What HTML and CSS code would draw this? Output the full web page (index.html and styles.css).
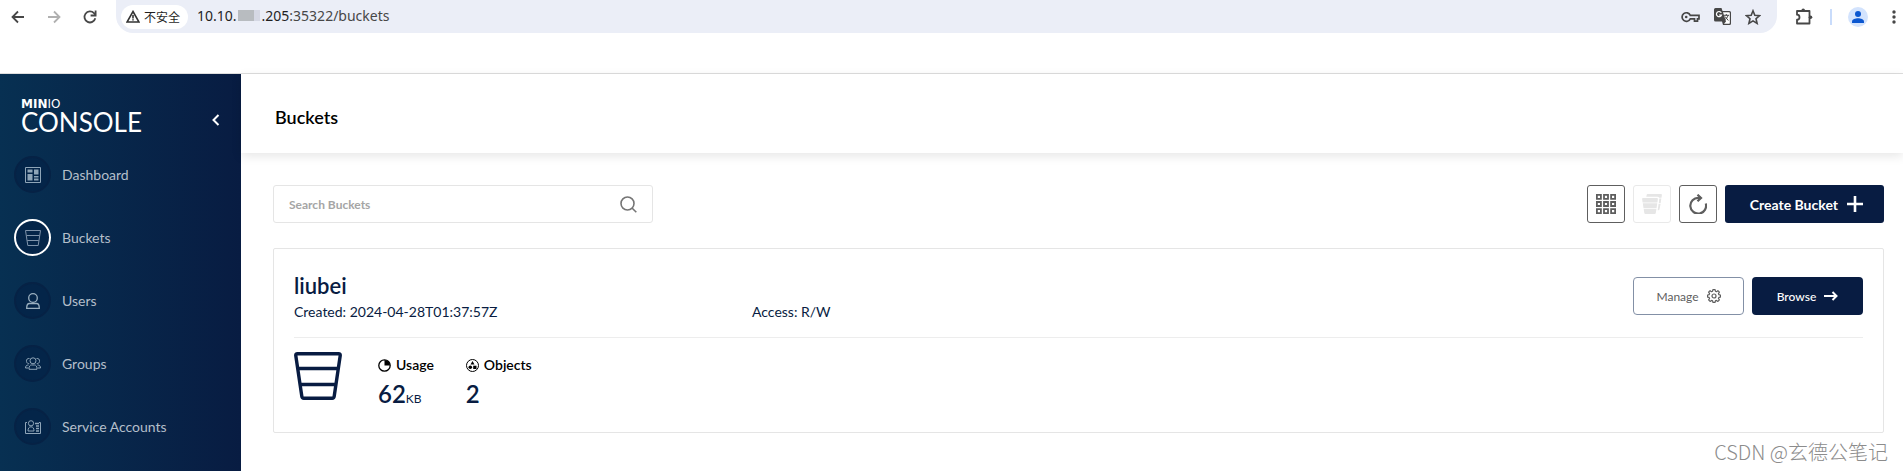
FILE: index.html
```html
<!doctype html>
<html lang="en">
<head>
<meta charset="utf-8">
<title>MinIO Console</title>
<link rel="stylesheet" href="styles.css">
</head>
<body>
<div class="browser">
	<button class="nav_btn" aria-label="Back"><svg width="16" height="16" viewBox="0 0 16 16" fill="none" stroke="#474747" stroke-width="1.8"><path d="M14 8H3M8 2.5L2.5 8 8 13.500"/></svg></button>
	<button class="nav_btn" aria-label="Forward"><svg width="16" height="16" viewBox="0 0 16 16" fill="none" stroke="#b0b0b0" stroke-width="1.8"><path d="M2 8h11M8 2.500L13.500 8 8 13.500"/></svg></button>
	<button class="nav_btn" aria-label="Reload"><svg width="16" height="16" viewBox="0 0 16 16" fill="none" stroke="#474747" stroke-width="1.8"><path d="M13.300 9.300A5.500 5.500 0 1 1 12 4.200L13.500 5.800"/><path d="M13.600 1.500v5h-5"/></svg></button>
	<div class="omnibox">
		<button class="chip"><svg width="14" height="13" viewBox="0 0 14 13" fill="none" stroke="#333" stroke-width="1.6"><path d="M7 1.500L13 12H1z"/><path d="M7 5v3.500M7 9.300v1.300"/></svg>不安全</button>
		<span class="url"><span>10.10.</span><span class="mosaic"></span><span>.205<span class="path">:35322/buckets</span></span></span>
		<div class="omni_icons">
			<svg width="19" height="12" viewBox="0 0 19 12" fill="none" stroke="#474747" stroke-width="1.7"><path d="M9.300 4.300h8.700v3.500h-1.500v2.300h-3v-2.300H9.300A4.300 4.300 0 1 1 9.300 4.300z"/><circle cx="5.200" cy="6" r="1.300" fill="#474747" stroke="none"/></svg>
			<svg width="17" height="17" viewBox="0 0 17 17"><path fill="#474747" d="M1.500 0h6l1 3H15.500a1.500 1.500 0 0 1 1.500 1.500v11a1.500 1.500 0 0 1-1.500 1.500H9l-1-3.500H1.500A1.500 1.500 0 0 1 0 12V1.500A1.500 1.500 0 0 1 1.500 0z"/><path fill="#fff" d="M9 4.200h6.300l.5.500v10.600l-.5.500H10l2-2.300z"/><path d="M7.300 4.800A2.600 2.600 0 1 0 7.500 7H5" fill="none" stroke="#fff" stroke-width="1.200"/><path d="M9.800 7.300h5.200M12.300 6v1.300M14 7.500c-.5 2-2 3.500-3.500 4.300M11 8.500l3.300 4" fill="none" stroke="#474747"/></svg>
			<svg width="16" height="16" viewBox="0 0 16 16" fill="none" stroke="#474747" stroke-width="1.600"><path d="M8 1.800l1.800 4.400 4.800.4-3.600 3.100 1.100 4.700L8 11.900l-4.100 2.500L5 9.700 1.400 6.600l4.800-.4z"/></svg>
		</div>
	</div>
	<button class="ext_btn" aria-label="Extensions"><svg width="18" height="18" viewBox="0 0 18 18"><path fill="none" stroke="#474747" stroke-width="1.800" stroke-linejoin="round" d="M2 3h12.500v12.500H2v-3.800a2.500 2.500 0 0 0 0-5z"/><circle cx="8.200" cy="2.200" r="1.800" fill="#474747"/><circle cx="15.500" cy="9.200" r="1.800" fill="#474747"/></svg></button>
	<span class="split"></span>
	<button class="profile" aria-label="Profile"><svg width="20" height="20" viewBox="0 0 20 20"><circle cx="10" cy="10" r="10" fill="#d3e3fd"/><circle cx="10" cy="7" r="3" fill="#0b57d0"/><path fill="#0b57d0" d="M4 16v-1.500c0-2.200 3.500-3.300 6-3.300s6 1.100 6 3.300V16z"/></svg></button>
	<button class="more" aria-label="Menu"><svg width="4" height="16" viewBox="0 0 4 16" fill="#474747"><circle cx="2" cy="3" r="1.700"/><circle cx="2" cy="8" r="1.700"/><circle cx="2" cy="13" r="1.700"/></svg></button>
</div>
<div class="bookmarks"></div>
<div class="app">
	<aside class="sidebar">
		<div class="brand">
			<div class="logo">
				<span class="logo_top"><b>MIN</b>IO</span>
				<span class="logo_name">CONSOLE</span>
			</div>
			<button class="collapse" aria-label="Collapse menu"><svg width="8" height="12" viewBox="0 0 8 12" fill="none" stroke="#fff" stroke-width="2"><path d="M6.500 1L1.500 6l5 5"/></svg></button>
		</div>
		<nav class="menu">
			<a href="#" class="item"><span class="round"><svg width="16" height="16" viewBox="0 0 16 16"><path d="M.5.500h15v15H.5z" fill="none" stroke="#8fa5b8"/><path fill="#8fa5b8" d="M2.500 2.500h5v3h-5zM9 2.500h4.500v5H9zM2.500 7h5v6.500h-5zM9 9h4.500v1.500H9zM9 11.500h4.500v2H9z"/></svg></span>Dashboard</a>
			<a href="#" class="item"><span class="round active"><svg width="16" height="16" viewBox="0 0 16 16" fill="none" stroke="#7f93aa"><path d="M.5.500h15l-2.300 15H2.800zM1.500 5.500h13M2.200 10.500h11.600"/></svg></span>Buckets</a>
			<a href="#" class="item"><span class="round"><svg width="14" height="16" viewBox="0 0 14 16" fill="none" stroke="#9aafbf" stroke-width="1.300"><circle cx="7" cy="5" r="4.300"/><path d="M3.500 10.500h7c1.700 0 2.800 1.800 2.800 4.800H.7c0-3 1.100-4.800 2.800-4.800z"/></svg></span>Users</a>
			<a href="#" class="item"><span class="round"><svg width="16" height="13" viewBox="0 0 16 13" fill="none" stroke="#8fa5b8"><circle cx="8" cy="3.800" r="3"/><path d="M4 12.300c0-3 1-4.300 2.500-4.300h3c1.500 0 2.500 1.300 2.500 4.300zM4.500 1.600C2.500 1 1.200 2.500 1.500 4.500c.2 1.500 1.500 2.300 2.700 2M11.500 1.600c2-.6 3.300.9 3 2.900-.2 1.500-1.500 2.300-2.700 2M3.500 8C1.500 8 .5 9 .5 11h3M12.500 8c2 0 3 1 3 3h-3"/></svg></span>Groups</a>
			<a href="#" class="item"><span class="round"><svg width="16" height="14" viewBox="0 0 16 14" fill="none" stroke="#8fa5b8"><path d="M2 2.500H.5v11h15v-11H14"/><circle cx="6" cy="3.300" r="2.600"/><path d="M3 11c0-2.700 1-4.200 3-4.200S9 8.300 9 11z"/><path d="M10 3.500h4M11 6h3M11 8.500h3M11 11h3" stroke-width="1.500"/></svg></span>Service Accounts</a>
		</nav>
	</aside>
	<main class="content">
		<header class="page_head"><h1>Buckets</h1></header>
		<div class="page">
			<div class="tools">
				<label class="search">
					<input type="text" placeholder="Search Buckets" aria-label="Search Buckets">
					<svg width="17" height="17" viewBox="0 0 17 17" fill="none" stroke="#757575" stroke-width="1.600"><circle cx="7.500" cy="7.500" r="6.500"/><path d="M12 12l4.300 4.300"/></svg>
				</label>
				<div class="actions">
					<button class="square" aria-label="Grid view"><svg width="20" height="20" viewBox="0 0 20 20" fill="none" stroke="#5e5e5e" stroke-width="1.800"><path d="M.9.900h4v4h-4zM8 .9h4v4H8zM15.100.900h4v4h-4zM.9 8h4v4h-4zM8 8h4v4H8zM15.100 8h4v4h-4zM.9 15.100h4v4h-4zM8 15.100h4v4H8zM15.100 15.100h4v4h-4z"/></svg></button>
					<button class="square off" aria-label="Bulk actions" disabled><svg width="20" height="20" viewBox="0 0 20 20" fill="#e6e6e6"><path d="M5.500 0H19q1 0 .9 1l-.4 2.800h-2.300q-.5-1-1.700-1H4.300L4.700.8q.1-.8.800-.8zM17.300 4.500h2l-.6 4.500h-1.900zM16.600 9.800h2l-1 5.200q-.3 1.200-1.400 1.200h-.5zM1 4h14q1 0 .9 1l-.5 3.500H.6L.1 5Q0 4 1 4zM.8 9.200h14.500l-.8 5H1.500zM1.700 14.900h12.700l-.6 4.100q-.2 1-1 1H3.400q-.9 0-1.100-1z"/></svg></button>
					<button class="square" aria-label="Refresh"><svg width="18" height="20" viewBox="0 0 18 20" fill="none" stroke="#5e5e5e" stroke-width="2.200"><path d="M16.800 9.500A7.900 7.900 0 1 1 9.500 3.800H12"/><path d="M8.500.700L12 3.900 8.500 7.200"/></svg></button>
					<button class="create">Create Bucket<svg width="16" height="16" viewBox="0 0 16 16" stroke="#fff" stroke-width="2.600"><path d="M8 0v16M0 8h16"/></svg></button>
				</div>
			</div>
			<section class="card">
				<div class="card_top">
					<div class="info">
						<h2>liubei</h2>
						<div class="meta"><span>Created: 2024-04-28T01:37:57Z</span><span>Access: R/W</span></div>
					</div>
					<div class="card_btns">
						<button class="manage">Manage<svg width="14" height="14" viewBox="0 0 14 14" fill="none" stroke="#5e5e5e" stroke-width="1.200"><circle cx="7" cy="7" r="2"/><path stroke-linejoin="round" d="M5.900.600h2.200l.3 1.600 1.100.5 1.400-1 1.500 1.500-1 1.400.5 1.100 1.500.3v2.100l-1.500.3-.5 1.100 1 1.400-1.500 1.500-1.400-1-1.100.5-.3 1.500H5.900l-.3-1.500-1.100-.5-1.400 1-1.500-1.500 1-1.400-.5-1.100L.6 8.100V6l1.500-.3.5-1.100-1-1.400 1.500-1.500 1.400 1 1.100-.5z"/></svg></button>
						<button class="browse">Browse<svg width="14" height="10" viewBox="0 0 14 10" fill="none" stroke="#fff" stroke-width="2"><path d="M0 5h12M8.500 1l4 4-4 4"/></svg></button>
					</div>
				</div>
				<div class="card_stats">
					<svg class="bucket" width="48" height="48" viewBox="0 0 48 48" fill="none" stroke="#081c42" stroke-width="3.400" stroke-linejoin="round"><path d="M3.500 1.700h41q2 0 1.700 2l-6 40.500q-.3 2-2 2h-28.400q-1.700 0-2-2l-6-40.500q-.3-2 1.700-2zM4.500 16.500h39M6.500 32.500h35"/></svg>
					<div class="stat">
						<div class="stat_name"><svg width="13" height="13" viewBox="0 0 13 13"><circle cx="6.500" cy="6.500" r="5.700" fill="none" stroke="#000" stroke-width="1.300"/><path d="M6.500 6.500V1a5.500 5.500 0 0 1 5.500 5.500z"/></svg>Usage</div>
						<div class="stat_val">62<small>KB</small></div>
					</div>
					<div class="stat">
						<div class="stat_name"><svg width="13" height="13" viewBox="0 0 13 13"><circle cx="6.500" cy="6.500" r="6" fill="none" stroke="#000"/><path d="M6.500 2l2 3.500h-4z"/><circle cx="4.300" cy="8.300" r="1.800"/><path d="M7.200 6.700h3.300V10H7.200z"/></svg>Objects</div>
						<div class="stat_val">2</div>
					</div>
				</div>
			</section>
		</div>
	</main>
</div>
<div class="watermark">CSDN @玄德公笔记</div>
</body>
</html>
```

FILE: styles.css
```css
*{margin:0; padding:0; box-sizing:border-box;}
body{height:100vh; display:flex; flex-direction:column; overflow:hidden; background:#fff; font-family:Lato,"Noto Sans CJK SC",sans-serif; color:#081c42;}
button{font-family:inherit; background:none; border:0; cursor:pointer; display:flex; align-items:center; justify-content:center;}
a{text-decoration:none;}
svg{flex:none; display:block;}

.browser{display:flex; align-items:center; height:33px; padding-left:10px; flex:none;}
.nav_btn{width:16px; height:32px; margin-right:20px;}
.nav_btn:nth-child(3){margin-right:18px;}
.omnibox{flex:1; display:flex; align-items:center; height:33px; padding:0 16px 0 5px; background:#ebeef7; border-radius:0 0 17px 17px;}
.chip{height:24px; padding:0 8px 0 5px; gap:4px; border-radius:12px; background:#fff; font:12px "Noto Sans CJK SC",sans-serif; color:#1f1f1f;}
.url{display:flex; align-items:center; margin-left:9px; padding-bottom:2px; font-family:"Noto Sans",sans-serif; font-size:14px; color:#1f1f1f;}
.url .path{color:#474747;}
.mosaic{width:22px; height:11px; margin:0 2px 0 1px; background:linear-gradient(90deg,#b8bcc0 75%,#d5d8e4 75%);}
.omni_icons{display:flex; align-items:center; gap:14px; margin-left:auto;}
.ext_btn{width:18px; height:32px; margin-left:18px;}
.split{width:2px; height:16px; margin:0 16px 0 17px; background:#c9dcfb;}
.profile{width:20px; height:32px; margin-right:24px;}
.more{width:4px; height:32px; margin-right:7px;}
.bookmarks{height:41px; flex:none; border-bottom:1px solid #dedede;}

.app{flex:1; display:flex; min-height:0;}
.sidebar{width:241px; flex:none; background:linear-gradient(90deg,#073052 0%,#081c42 100%);}
.brand{display:flex; justify-content:space-between; padding:24px 21px 0 21px; height:82px;}
.logo{color:#fff;}
.logo_top{display:block; font:12px/12px "DejaVu Sans",sans-serif;}
.logo_name{display:block; font:400 26px/24px Lato,sans-serif;}
.collapse{width:8px; height:44px;}
.menu{display:flex; flex-direction:column; gap:26px; padding-left:14px;}
.item{display:flex; align-items:center; gap:11px; height:37px; font-size:14px; color:#b4bfca;}
.round{display:flex; align-items:center; justify-content:center; width:37px; height:37px; border:2px solid #062245; border-radius:50%; background:#042549;}
.round.active{border-color:#fff;}

.content{flex:1; min-width:0;}
.page_head{display:flex; align-items:center; height:79px; padding:6px 34px 0; box-shadow:0 3px 10px rgba(0,0,0,.1);}
.page_head h1{font-size:18px; line-height:24px; font-weight:600; color:#000;}
.page{padding:32px 19px 0 32px;}
.tools{display:flex; justify-content:space-between; margin-bottom:25px;}
.search{display:flex; align-items:center; width:380px; height:38px; padding:0 15px; border:1px solid #e5e5e5; border-radius:3px;}
.search input{flex:1; border:0; outline:0; background:none; font:700 12px Lato,sans-serif; color:#000;}
.search input::placeholder{color:#a5a5a5;}
.actions{display:flex; gap:8px;}
.square{width:38px; height:38px; border:1px solid #5e5e5e; border-radius:3px;}
.square.off{border-color:#e9e9e9;}
.create{height:38px; padding:0 21px 0 25px; gap:9px; border-radius:3px; background:#081c42; color:#fff; font-size:14px; font-weight:700;}
.card{padding:0 20px; height:185px; border:1px solid #e5e5e5; border-radius:2px;}
.card_top{display:flex; justify-content:space-between; height:89px; padding-top:24px; border-bottom:1px solid #ededed;}
.info{flex:1;}
.info h2{font-size:22px; line-height:26px; font-weight:600;}
.meta{display:grid; grid-template-columns:458px 1fr; font-size:14px; line-height:26px;}
.card_btns{display:flex; gap:8px; padding-top:4px;}
.card_btns button{width:111px; height:38px; gap:8px; border-radius:4px; font-size:12px;}
.card_btns .manage{border:1px solid #8390a6; color:#5e5e5e;}
.card_btns .browse{background:#081c42; color:#fff; font-weight:500;}
.card_stats{display:flex; padding-top:14px;}
.bucket{margin-right:36px;}
.stat{margin-right:32px;}
.stat_name{display:flex; align-items:center; gap:5px; font-size:14px; line-height:26px; font-weight:600; color:#000;}
.stat_val{font-size:24px; line-height:32px; font-weight:600;}
.stat_val small{font-size:12px; font-weight:400;}
.watermark{position:absolute; right:15px; bottom:5px; font:300 20px/28px "Noto Sans CJK SC",sans-serif; color:#8c8c8c;}
```
